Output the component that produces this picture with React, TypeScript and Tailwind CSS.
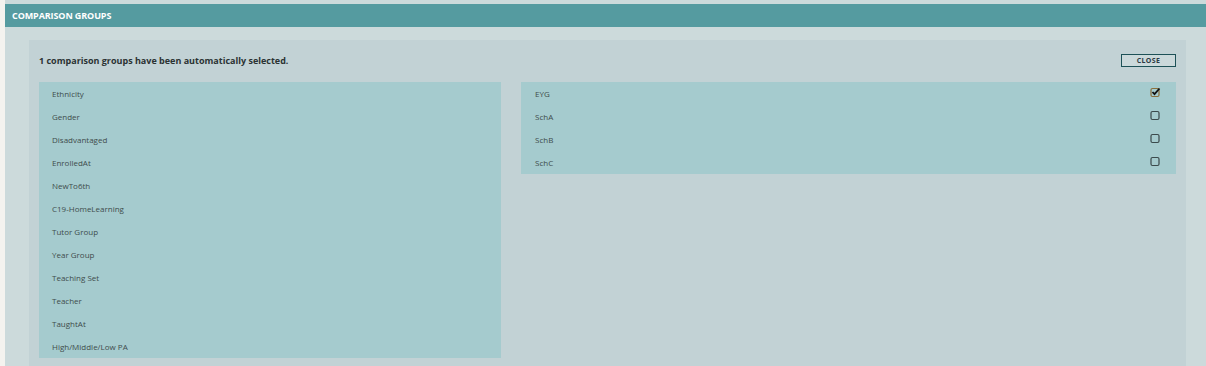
const leftItems = [
  "Ethnicity",
  "Gender",
  "Disadvantaged",
  "EnrolledAt",
  "NewTo6th",
  "C19-HomeLearning",
  "Tutor Group",
  "Year Group",
  "Teaching Set",
  "Teacher",
  "TaughtAt",
  "High/Middle/Low PA",
]

const rightItems = [
  { label: "EYG", checked: true },
  { label: "SchA", checked: false },
  { label: "SchB", checked: false },
  { label: "SchC", checked: false },
]

function CheckBox({ checked }: { checked: boolean }) {
  return (
    <svg width="11" height="11" viewBox="0 0 11 11" className="block">
      <rect
        x="1"
        y="1.5"
        width="8"
        height="8"
        rx="1.5"
        fill="none"
        stroke={checked ? "#8a6f3c" : "#3b4a4c"}
        strokeWidth="1.2"
      />
      {checked && (
        <path d="M2.5 5 L4.5 7.2 L9.5 1.5" fill="none" stroke="#111" strokeWidth="1.8" />
      )}
    </svg>
  )
}

export default function App() {
  return (
    <div
      className="w-[1206px] h-[366px] overflow-hidden bg-[#f4f3ef] pl-[5px]"
      style={{ fontFamily: '"Open Sans", sans-serif' }}
    >
      <div className="h-full bg-[#ccdadb] pt-[4px]">
        {/* Header */}
        <div className="h-[23px] bg-[#559ba0] flex items-center pl-[7px] text-white font-bold text-[9px] tracking-[-0.1px]">
          COMPARISON GROUPS
        </div>

        {/* Panel */}
        <div className="ml-[24px] mr-[20px] mt-[13px] h-[400px] bg-[#c2d2d5] px-[10px] pt-[14px]">
          <div className="flex items-center justify-between h-[13px]">
            <span className="text-[9px] font-bold text-[#2b3333]">
              1 comparison groups have been automatically selected.
            </span>
            <button className="w-[55px] h-[13px] border border-[#1d5157] bg-[#cbd9db] text-[7px] font-bold text-[#2c3a44] tracking-[0.3px] leading-none flex items-center justify-center">
              CLOSE
            </button>
          </div>

          <div className="mt-[15px] flex items-start gap-[20px]">
            <div className="w-[462px] bg-[#a5cbce]">
              {leftItems.map((item) => (
                <div key={item} className="h-[23px] flex items-center pl-[13px] text-[8px] text-[#404c4c]">
                  {item}
                </div>
              ))}
            </div>
            <div className="flex-1 bg-[#a5cbce]">
              {rightItems.map((item) => (
                <div key={item.label} className="h-[23px] flex items-center justify-between pl-[14px] pr-[15px] text-[8px] text-[#404c4c]">
                  <span>{item.label}</span>
                  <span className="-mt-[2px]">
                    <CheckBox checked={item.checked} />
                  </span>
                </div>
              ))}
            </div>
          </div>
        </div>
      </div>
    </div>
  )
}
